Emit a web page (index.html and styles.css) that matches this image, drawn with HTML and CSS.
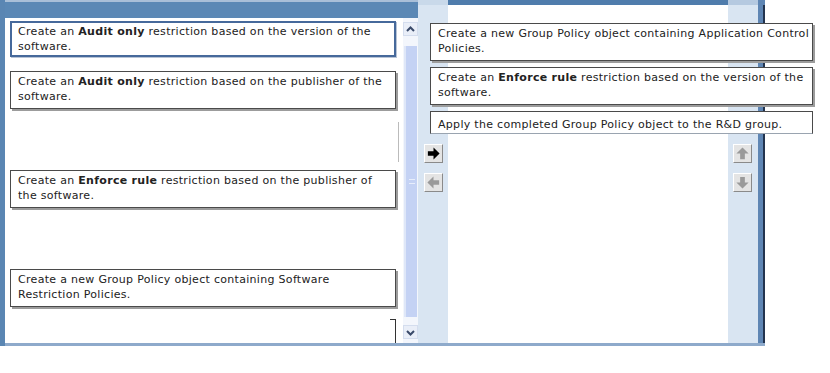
FILE: index.html
```html
<!DOCTYPE html>
<html lang="en">
<head>
  <meta charset="UTF-8" />
  <title>Build List and Reorder</title>
  <link rel="stylesheet" href="styles.css">
</head>
<body>

  <div class="window">
    <div class="source">
      <div class="source-head"></div>
      <div class="source-body">
        <div class="slots">
          <div class="slot"><div class="card selected">Create an <b>Audit only</b> restriction based on the version of the software.</div></div>
          <div class="slot"><div class="card">Create an <b>Audit only</b> restriction based on the publisher of the software.</div></div>
          <div class="slot"><span class="stray"></span></div>
          <div class="slot"><div class="card">Create an <b>Enforce rule</b> restriction based on the publisher of the software.</div></div>
          <div class="slot"></div>
          <div class="slot"><div class="card">Create a new Group Policy object containing Software Restriction Policies.</div></div>
          <div class="slot"><div class="bracket"></div></div>
        </div>
        <div class="scrollbar">
          <div class="sb-btn">
            <svg width="11" height="11" viewBox="0 0 11 11"><path d="M2 7l3.5-3.5L9 7" fill="none" stroke="#3a4a6a" stroke-width="2"/></svg>
          </div>
          <div class="sb-thumb"><span class="grip"></span></div>
          <div class="sb-btn">
            <svg width="11" height="11" viewBox="0 0 11 11"><path d="M2 4l3.5 3.5L9 4" fill="none" stroke="#3a4a6a" stroke-width="2"/></svg>
          </div>
        </div>
      </div>
    </div>

    <div class="target">
      <div class="target-head"></div>
      <div class="answers">
        <div class="card">Create a new Group Policy object containing Application Control Policies.</div>
        <div class="card">Create an <b>Enforce rule</b> restriction based on the version of the software.</div>
        <div class="card clipped">Apply the completed Group Policy object to the R&amp;D group.</div>
      </div>
      <div class="controls">
        <div class="btn-col">
          <button class="tool-btn">
            <svg width="15" height="15" viewBox="0 0 16 16"><path d="M2 5.5h6V1.5l6.5 6.5L8 14.5v-4H2z" fill="#000"/></svg>
          </button>
          <button class="tool-btn">
            <svg width="15" height="15" viewBox="0 0 16 16"><path d="M14 5.5H8V1.5L1.5 8 8 14.5v-4h6z" fill="#9a9a9a"/></svg>
          </button>
        </div>
        <div class="btn-col">
          <button class="tool-btn">
            <svg width="15" height="15" viewBox="0 0 16 16"><path d="M5.5 14V8H1.5L8 1.5 14.5 8h-4v6z" fill="#9a9a9a"/></svg>
          </button>
          <button class="tool-btn">
            <svg width="15" height="15" viewBox="0 0 16 16"><path d="M5.5 2v6H1.5L8 14.5 14.5 8h-4V2z" fill="#9a9a9a"/></svg>
          </button>
        </div>
      </div>
    </div>
  </div>

</body>
</html>
```

FILE: styles.css
```css
* {
  box-sizing: border-box;
}
body {
  margin: 0;
  background: #fff;
  font-family: "DejaVu Sans", Verdana, sans-serif;
  font-size: 11px;
  letter-spacing: 0.3px;
  color: #222;
}
.window {
  display: flex;
  width: 765px;
  height: 346px;
}

/* left list */
.source {
  width: 418px;
  display: flex;
  flex-direction: column;
  border-left: 5px solid #5a86b3;
}
.source-head {
  height: 18px;
  background: #5b88b5;
  border-top: 2px solid #a9bfd8;
}
.source-body {
  flex: 1;
  display: flex;
  border-bottom: 3px solid #8eaacb;
  overflow: hidden;
}
.slots {
  flex: 1;
  background: #fff;
  padding: 3px 0 0 5px;
  display: grid;
  grid-auto-rows: 49.5px;
}
.slot {
  position: relative;
}
.card {
  width: 386px;
  height: 38px;
  padding: 2px 7px;
  line-height: 15px;
  background: #fff;
  border: 1px solid #4a4a4a;
  box-shadow: 2px 2px 0 #9c9c9c;
}
.card.selected {
  height: 36px;
  padding: 1px 6px;
  border: 2px solid #46699b;
  box-shadow: 1px 1px 0 #b8c4d6;
}
.bracket {
  width: 6px;
  height: 30px;
  margin: 1px 0 0 380px;
  border-top: 1px solid #333;
  border-right: 1px solid #333;
}
.stray {
  position: absolute;
  left: 388px;
  top: 2px;
  width: 1px;
  height: 40px;
  background: #bbb;
}

/* scrollbar */
.scrollbar {
  width: 15px;
  display: flex;
  flex-direction: column;
  background: #f3f6fc;
  padding: 4px 0;
}
.sb-btn {
  height: 14px;
  display: flex;
  align-items: center;
  justify-content: center;
  background: #e9eef8;
  border: 1px solid #d4ddee;
}
.sb-thumb {
  flex: 1;
  margin: 10px 1px 8px;
  background: #c4d2f4;
  border-left: 2px solid #dfe7f8;
  display: flex;
  align-items: center;
  justify-content: center;
}
.grip {
  width: 6px;
  height: 5px;
  border-top: 1px solid #e8eefb;
  border-bottom: 1px solid #e8eefb;
}

/* right list */
.target {
  width: 347px;
  display: flex;
  flex-direction: column;
  background: linear-gradient(to right, #d9e5f2 0 30px, #fff 30px 310px, #d9e5f2 310px 340px, #5f86b4 340px 345px, #23344f 345px);
  border-bottom: 3px solid #8eaacb;
}
.target-head {
  height: 5px;
  background: linear-gradient(to right, #c9d9ea 0 30px, #4f7cac 30px 310px, #b5c9e0 310px 340px, #5f86b4 340px);
}
.answers {
  padding: 18px 0 0 12px;
  display: flex;
  flex-direction: column;
  gap: 6px;
}
.answers .card {
  width: 383px;
  height: 38px;
  padding-right: 1px;
}
.answers .card.clipped {
  height: 23px;
  padding-top: 5px;
  border-bottom-color: #9aa4b0;
  box-shadow: none;
}
.controls {
  display: flex;
  justify-content: space-between;
  padding: 10px 13px 0 6px;
}
.btn-col {
  display: flex;
  flex-direction: column;
  gap: 10px;
}
.tool-btn {
  width: 19px;
  height: 19px;
  padding: 0;
  display: flex;
  align-items: center;
  justify-content: center;
  background: #e4e4e4;
  border: 1px solid;
  border-color: #fff #8a8a8a #8a8a8a #fff;
}
```
